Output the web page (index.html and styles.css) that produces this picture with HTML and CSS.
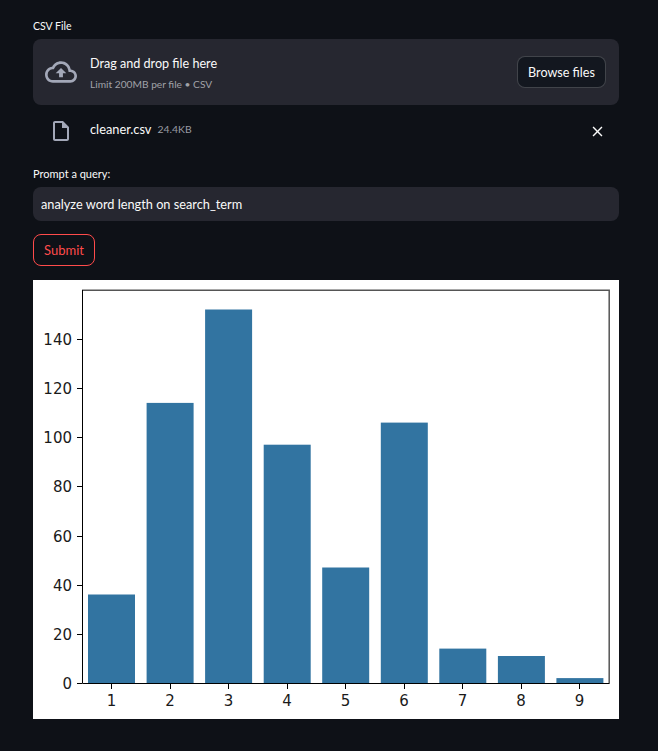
FILE: index.html
```html
<!DOCTYPE html>
<html lang="en">
<head>
<meta charset="UTF-8">
<meta name="viewport" content="width=device-width, initial-scale=1.0">
<title>CSV Query</title>
<link rel="stylesheet" href="styles.css">
</head>
<body>
<div class="container">
  <label class="field-label label-csv">CSV File</label>
  <div class="dropzone">
    <svg class="cloud-icon" viewBox="0 0 24 24"><path d="M19.35 10.04C18.67 6.59 15.64 4 12 4 9.11 4 6.6 5.64 5.35 8.04 2.34 8.36 0 10.91 0 14c0 3.31 2.69 6 6 6h13c2.76 0 5-2.24 5-5 0-2.64-2.05-4.78-4.65-4.96zM19 18H6c-2.21 0-4-1.79-4-4 0-2.05 1.53-3.76 3.56-3.97l1.07-.11.5-.95C8.08 7.14 9.94 6 12 6c2.62 0 4.88 1.86 5.39 4.43l.3 1.5 1.53.11c1.56.1 2.78 1.41 2.78 2.96 0 1.65-1.35 3-3 3zM8 13h2.55v3h2.9v-3H16l-4-4z"/></svg>
    <div class="drop-text">
      <span class="drop-title">Drag and drop file here</span>
      <small class="drop-limit">Limit 200MB per file • CSV</small>
    </div>
    <button class="browse-btn">Browse files</button>
  </div>
  <div class="file-row">
    <svg class="file-icon" viewBox="0 0 24 24"><path d="M14 2H6c-1.1 0-1.99.9-1.99 2L4 20c0 1.1.89 2 1.99 2H18c1.1 0 2-.9 2-2V8l-6-6zM6 20V4h7v5h5v11H6z"/></svg>
    <span class="file-name">cleaner.csv</span>
    <small class="file-size">24.4KB</small>
    <svg class="close-icon" viewBox="0 0 24 24"><path d="M19 6.41L17.59 5 12 10.59 6.41 5 5 6.41 10.59 12 5 17.59 6.41 19 12 13.41 17.59 19 19 17.59 13.41 12z"/></svg>
  </div>
  <label class="field-label label-query" for="query">Prompt a query:</label>
  <input class="query-input" id="query" type="text" value="analyze word length on search_term">
  <button class="submit-btn">Submit</button>
  <svg class="chart" viewBox="33 280 586 439">
    <rect class="chart-bg" x="33" y="280" width="586" height="439"/>
    <g class="bars">
      <rect x="88" y="594.5" width="47" height="88.5"/>
      <rect x="146.6" y="402.9" width="47" height="280.1"/>
      <rect x="205.1" y="309.5" width="47" height="373.5"/>
      <rect x="263.7" y="444.7" width="47" height="238.3"/>
      <rect x="322.2" y="567.5" width="47" height="115.5"/>
      <rect x="380.8" y="422.6" width="47" height="260.4"/>
      <rect x="439.3" y="648.6" width="47" height="34.4"/>
      <rect x="497.9" y="656" width="47" height="27"/>
      <rect x="556.4" y="678.1" width="47" height="4.9"/>
    </g>
    <path class="spine-soft" d="M82 290.2H609.2V684"/>
    <path class="spine" d="M82.5 290V683.5H609"/>
    <path class="ticks" d="M77 683.5h5M77 634.5h5M77 585.5h5M77 536.5h5M77 486.5h5M77 437.5h5M77 388.5h5M77 339.5h5M111.5 684v5M170.5 684v5M228.5 684v5M287.5 684v5M345.5 684v5M404.5 684v5M462.5 684v5M521.5 684v5M579.5 684v5"/>
    <g class="y-labels">
      <text x="72" y="688.5">0</text>
      <text x="72" y="639.5">20</text>
      <text x="72" y="590.5">40</text>
      <text x="72" y="541.5">60</text>
      <text x="72" y="491.5">80</text>
      <text x="72" y="442.5">100</text>
      <text x="72" y="393.5">120</text>
      <text x="72" y="344.5">140</text>
    </g>
    <g class="x-labels">
      <text x="111.5" y="706">1</text>
      <text x="170" y="706">2</text>
      <text x="228.5" y="706">3</text>
      <text x="287" y="706">4</text>
      <text x="345.5" y="706">5</text>
      <text x="404" y="706">6</text>
      <text x="462.5" y="706">7</text>
      <text x="521" y="706">8</text>
      <text x="579.5" y="706">9</text>
    </g>
  </svg>
</div>
</body>
</html>
```
FILE: styles.css
```css
html, body {
  margin: 0;
  padding: 0;
}

body {
  background-color: #0e1117;
  color: #fafafa;
  font-family: Lato, "Noto Sans", sans-serif;
  height: 751px;
  overflow: hidden;
}

.container {
  width: 586px;
  margin-left: 33px;
  padding-top: 19px;
  display: flex;
  flex-direction: column;
}

.field-label {
  display: block;
  font-size: 11px;
  line-height: 14px;
}

.label-csv {
  margin-bottom: 6px;
  font-size: 10.5px;
}

.dropzone {
  height: 66px;
  box-sizing: border-box;
  background-color: #262730;
  border-radius: 8px;
  display: flex;
  align-items: center;
  padding: 0 13px 0 12px;
}

.cloud-icon {
  width: 32px;
  height: 32px;
  fill: #a3a8b8;
  margin-right: 13px;
}

.drop-text {
  flex: 1;
  display: flex;
  flex-direction: column;
  gap: 4px;
  padding-top: 1px;
}

.drop-title {
  font-size: 12.6px;
  line-height: 18px;
}

.drop-limit {
  font-size: 10.2px;
  line-height: 14px;
  color: #a0a2a8;
}

.browse-btn {
  height: 32px;
  width: 89px;
  padding: 0;
  background-color: #13171f;
  color: #fafafa;
  border: 1px solid rgba(250, 250, 250, 0.2);
  border-radius: 8px;
  font-family: inherit;
  font-size: 12.6px;
}

.file-row {
  height: 28px;
  margin-top: 12px;
  display: flex;
  align-items: center;
  padding: 0 13px 0 16px;
}

.file-icon {
  width: 24px;
  height: 24px;
  fill: #a3a8b8;
  margin-right: 17px;
}

.file-name {
  font-size: 12.8px;
  margin: 0 6px 4px 0;
}

.file-size {
  flex: 1;
  font-size: 10.4px;
  color: #9a9ca3;
  margin-bottom: 4px;
}

.close-icon {
  width: 17px;
  height: 17px;
  fill: #fafafa;
}

.label-query {
  margin-top: 22px;
  margin-bottom: 6px;
}

.query-input {
  height: 34px;
  box-sizing: border-box;
  padding: 0 8px 1px;
  background-color: #262730;
  color: #fafafa;
  border: none;
  border-radius: 8px;
  font-family: inherit;
  font-size: 12.75px;
}

.submit-btn {
  align-self: flex-start;
  width: 62px;
  height: 32px;
  margin-top: 13px;
  padding: 0;
  background-color: #0e1117;
  color: #ff4b4b;
  border: 1px solid #ff4b4b;
  border-radius: 8px;
  font-family: inherit;
  font-size: 13px;
}

.chart {
  display: block;
  width: 586px;
  height: 439px;
  margin-top: 14px;
  font-family: "DejaVu Sans", sans-serif;
  font-size: 15px;
  fill: #1a1a1a;
}

.chart-bg {
  fill: #fff;
}

.bars rect {
  fill: #3274a1;
}

.spine-soft {
  fill: none;
  stroke: #555;
  stroke-width: 1.5;
}

.spine {
  fill: none;
  stroke: #000;
  stroke-width: 1;
}

.ticks {
  fill: none;
  stroke: #000;
  stroke-width: 1;
}

.y-labels text {
  text-anchor: end;
}

.x-labels text {
  text-anchor: middle;
}
```
